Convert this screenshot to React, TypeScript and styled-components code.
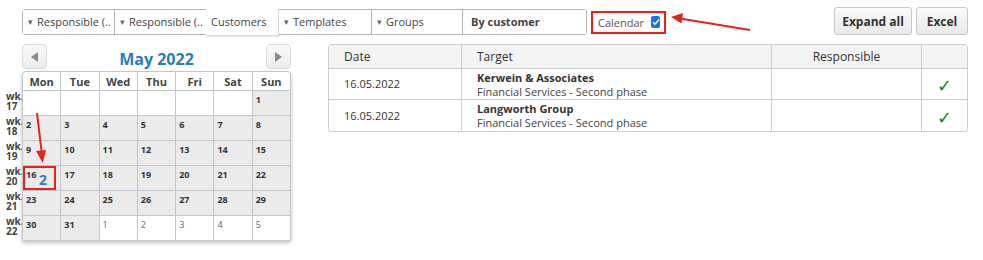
import React from 'react';
import styled, { createGlobalStyle } from 'styled-components';

const GlobalStyle = createGlobalStyle`
  body {
    margin: 0;
    background: #fff;
    font-family: 'Open Sans', 'Noto Sans', sans-serif;
    color: #333;
  }
`;

const FILTERS = [
  { label: 'Responsible (..', caret: true, width: 92 },
  { label: 'Responsible (..', caret: true, width: 92 },
  { label: 'Customers', caret: false, width: 73, active: true },
  { label: 'Templates', caret: true, width: 93 },
  { label: 'Groups', caret: true, width: 91 },
  { label: 'By customer', caret: false, width: 123, bold: true },
];

const DAYS = ['Mon', 'Tue', 'Wed', 'Thu', 'Fri', 'Sat', 'Sun'];

type Cell = { day?: number; inMonth: boolean };

const WEEKS: { wk: number; cells: Cell[] }[] = [
  { wk: 17, cells: [...Array(6).fill({ inMonth: false }), { day: 1, inMonth: true }] },
  { wk: 18, cells: [2, 3, 4, 5, 6, 7, 8].map((d) => ({ day: d, inMonth: true })) },
  { wk: 19, cells: [9, 10, 11, 12, 13, 14, 15].map((d) => ({ day: d, inMonth: true })) },
  { wk: 20, cells: [16, 17, 18, 19, 20, 21, 22].map((d) => ({ day: d, inMonth: true })) },
  { wk: 21, cells: [23, 24, 25, 26, 27, 28, 29].map((d) => ({ day: d, inMonth: true })) },
  {
    wk: 22,
    cells: [
      { day: 30, inMonth: true },
      { day: 31, inMonth: true },
      ...[1, 2, 3, 4, 5].map((d) => ({ day: d, inMonth: false })),
    ],
  },
];

const ROWS = [
  { date: '16.05.2022', name: 'Kerwein & Associates', sub: 'Financial Services - Second phase' },
  { date: '16.05.2022', name: 'Langworth Group', sub: 'Financial Services - Second phase' },
];

export default function App() {
  return (
    <Page>
      <GlobalStyle />
      <Toolbar>
        <FilterGroup>
          {FILTERS.map((f, i) => (
            <Segment key={i} $width={f.width} $active={f.active} $bold={f.bold}>
              {f.caret && <Caret>▾</Caret>}
              {f.label}
            </Segment>
          ))}
        </FilterGroup>
        <CalendarToggle>
          Calendar
          <CheckBox>
            <svg width="8" height="8" viewBox="0 0 8 8">
              <path d="M1 4.2 L3.1 6.2 L7 1.6" fill="none" stroke="#fff" strokeWidth="1.5" />
            </svg>
          </CheckBox>
        </CalendarToggle>
        <Actions>
          <ActionButton $width={78}>Expand all</ActionButton>
          <ActionButton $width={52}>Excel</ActionButton>
        </Actions>
      </Toolbar>

      <Main>
        <CalendarWrap>
          <CalHeader>
            <NavButton>
              <svg width="8" height="10" viewBox="0 0 8 10">
                <path d="M7 0 L0 5 L7 10 Z" fill="#8a8a8a" />
              </svg>
            </NavButton>
            <MonthTitle>May 2022</MonthTitle>
            <NavButton>
              <svg width="8" height="10" viewBox="0 0 8 10">
                <path d="M1 0 L8 5 L1 10 Z" fill="#8a8a8a" />
              </svg>
            </NavButton>
          </CalHeader>
          <CalBody>
            <WeekColumn>
              {WEEKS.map((w) => (
                <WeekLabel key={w.wk}>
                  <span>wk.</span>
                  <span>{w.wk}</span>
                </WeekLabel>
              ))}
            </WeekColumn>
            <Grid>
              {DAYS.map((d) => (
                <DayName key={d}>{d}</DayName>
              ))}
              {WEEKS.map((w) =>
                w.cells.map((c, i) => (
                  <DayCell key={`${w.wk}-${i}`} $inMonth={c.inMonth}>
                    {c.day}
                    {w.wk === 20 && i === 0 && <CountMark>2</CountMark>}
                  </DayCell>
                ))
              )}
            </Grid>
          </CalBody>
          <Arrow width="20" height="60" viewBox="0 0 20 60" style={{ left: 21, top: 69 }}>
            <line x1="10" y1="0" x2="15" y2="42" stroke="#e8211b" strokeWidth="2" />
            <path d="M9 38 L15.8 50 L19 37 Z" fill="#e8211b" />
          </Arrow>
        </CalendarWrap>

        <Table>
          <thead>
            <tr>
              <Th $width={133}>Date</Th>
              <Th $width={310}>Target</Th>
              <Th $width={150} $center>Responsible</Th>
              <Th $width={45} />
            </tr>
          </thead>
          <tbody>
            {ROWS.map((r, i) => (
              <tr key={i}>
                <Td>{r.date}</Td>
                <Td>
                  <TargetName>{r.name}</TargetName>
                  <TargetSub>{r.sub}</TargetSub>
                </Td>
                <Td />
                <Td $center>
                  <Check>✓</Check>
                </Td>
              </tr>
            ))}
          </tbody>
        </Table>
      </Main>

      <Arrow width="90" height="24" viewBox="0 0 90 24" style={{ left: 668, top: 10 }}>
        <line x1="82" y1="20" x2="12" y2="8.5" stroke="#e8211b" strokeWidth="2" />
        <path d="M3 7 L15 3 L13.5 13.5 Z" fill="#e8211b" />
      </Arrow>
    </Page>
  );
}

const Page = styled.div`
  position: relative;
  width: 983px;
  height: 260px;
  overflow: hidden;
`;

const Toolbar = styled.div`
  display: flex;
  align-items: center;
  padding: 7px 15px 0 22px;
`;

const FilterGroup = styled.div`
  display: flex;
  height: 26px;
  border: 1px solid #b5b5b5;
  border-radius: 3px;
  box-sizing: border-box;
  margin-top: 1px;
`;

const Segment = styled.div<{ $width: number; $active?: boolean; $bold?: boolean }>`
  display: flex;
  align-items: center;
  gap: 4px;
  box-sizing: border-box;
  width: ${(p) => p.$width}px;
  padding: 0 5px;
  font-size: 11px;
  font-weight: ${(p) => (p.$bold ? 700 : 400)};
  color: #444;
  white-space: nowrap;
  overflow: hidden;
  border-right: 1px solid #b5b5b5;
  background: #fff;
  ${(p) => p.$bold && 'padding-left: 8px;'}
  ${(p) =>
    p.$active &&
    `
    border-right: 1px solid #d8d8d8;
    border-bottom: 1px solid #d8d8d8;
    margin: -1px 0 -2px -1px;
    height: 27px;
    box-shadow: 1px 1px 1px rgba(0,0,0,0.08);
  `}
  &:last-child {
    border-right: none;
  }
`;

const Caret = styled.span`
  font-size: 9px;
  color: #666;
`;

const CalendarToggle = styled.label`
  display: flex;
  align-items: center;
  gap: 7px;
  margin-left: 4px;
  margin-top: 2px;
  width: 75px;
  height: 23px;
  box-sizing: border-box;
  padding: 0 4px 0 5px;
  border: 2px solid #e8211b;
  font-size: 11px;
  color: #555;
`;

const CheckBox = styled.span`
  display: flex;
  align-items: center;
  justify-content: center;
  width: 12px;
  height: 12px;
  border-radius: 2px;
  background: #1a73e8;
`;

const Actions = styled.div`
  display: flex;
  gap: 4px;
  margin-left: auto;
`;

const ActionButton = styled.button<{ $width: number }>`
  width: ${(p) => p.$width}px;
  height: 28px;
  border: 1px solid #c8c8c8;
  border-radius: 3px;
  background: linear-gradient(#fafafa, #e9e9e9);
  font-family: 'Open Sans', sans-serif;
  font-size: 12px;
  font-weight: 700;
  color: #333;
  padding: 0;
`;

const Main = styled.div`
  display: flex;
  align-items: flex-start;
  gap: 37px;
  padding: 9px 0 0 6px;
`;

const CalendarWrap = styled.div`
  position: relative;
  width: 285px;
`;

const CalHeader = styled.div`
  display: flex;
  align-items: center;
  justify-content: space-between;
  margin-left: 16px;
  height: 25px;
`;

const NavButton = styled.div`
  display: flex;
  align-items: center;
  justify-content: center;
  width: 25px;
  height: 25px;
  box-sizing: border-box;
  border: 1px solid #dcdcdc;
  border-radius: 4px;
  background: linear-gradient(#f9f9f9, #ececec);
`;

const MonthTitle = styled.div`
  font-size: 16px;
  font-weight: 700;
  color: #2a7cb9;
  margin-top: 4px;
`;

const CalBody = styled.div`
  display: flex;
  margin-top: 2px;
`;

const WeekColumn = styled.div`
  display: flex;
  flex-direction: column;
  width: 16px;
  padding-top: 19px;
`;

const WeekLabel = styled.div`
  display: flex;
  flex-direction: column;
  height: 25px;
  box-sizing: border-box;
  padding-top: 2px;
  font-size: 10px;
  font-weight: 700;
  line-height: 9.5px;
  color: #444;
  white-space: nowrap;
`;

const Grid = styled.div`
  display: grid;
  grid-template-columns: repeat(7, 1fr);
  grid-template-rows: 18px repeat(6, 24px);
  width: 269px;
  box-sizing: border-box;
  border: 1px solid #c3c6cb;
  border-radius: 4px 4px 2px 2px;
  background: #c3c6cb;
  gap: 1px;
  overflow: hidden;
  box-shadow: 0 2px 4px rgba(0, 0, 0, 0.25);
`;

const DayName = styled.div`
  display: flex;
  align-items: center;
  justify-content: center;
  background: #fff;
  font-size: 11px;
  font-weight: 700;
  color: #444;
`;

const DayCell = styled.div<{ $inMonth: boolean }>`
  position: relative;
  background: ${(p) => (p.$inMonth ? '#ebebeb' : '#fff')};
  font-size: 9px;
  font-weight: ${(p) => (p.$inMonth ? 700 : 400)};
  color: ${(p) => (p.$inMonth ? '#333' : '#666')};
  padding: 4px 0 0 3px;
  line-height: 10px;
`;

const CountMark = styled.div`
  position: absolute;
  left: 0;
  top: 0;
  width: 33px;
  height: 24px;
  box-sizing: border-box;
  border: 2px solid #e8211b;
  display: flex;
  align-items: center;
  justify-content: center;
  padding: 3px 0 0 7px;
  font-size: 14px;
  font-weight: 700;
  color: #2a7cb9;
`;

const Arrow = styled.svg`
  position: absolute;
  overflow: visible;
`;

const Table = styled.table`
  border-collapse: separate;
  border-spacing: 0;
  width: 638px;
  border: 1px solid #cfcfcf;
  border-radius: 3px;
  font-size: 11px;
  color: #333;
  table-layout: fixed;
`;

const Th = styled.th<{ $width: number; $center?: boolean }>`
  box-sizing: border-box;
  width: ${(p) => p.$width}px;
  height: 24px;
  padding: 0 15px;
  background: #f3f3f3;
  font-weight: 400;
  font-size: 12px;
  text-align: ${(p) => (p.$center ? 'center' : 'left')};
  border-right: 1px solid #cfcfcf;
  border-bottom: 1px solid #cfcfcf;
  &:last-child {
    border-right: none;
  }
`;

const Td = styled.td<{ $center?: boolean }>`
  box-sizing: border-box;
  height: 31px;
  padding: 0 15px;
  text-align: ${(p) => (p.$center ? 'center' : 'left')};
  border-right: 1px solid #cfcfcf;
  border-bottom: 1px solid #cfcfcf;
  line-height: 14px;
  tr:last-child & {
    border-bottom: none;
  }
  &:last-child {
    border-right: none;
  }
`;

const TargetName = styled.div`
  font-weight: 700;
  margin-top: 1px;
`;

const TargetSub = styled.div`
  color: #444;
`;

const Check = styled.span`
  font-family: 'DejaVu Sans', sans-serif;
  font-size: 18px;
  font-weight: 700;
  color: #0f8a1a;
  position: relative;
  top: 3px;
`;
